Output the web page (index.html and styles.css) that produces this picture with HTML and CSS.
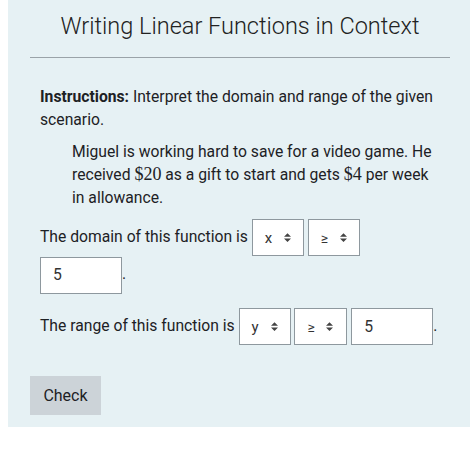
FILE: index.html
```html
<!DOCTYPE html>
<html>
<head>
<meta charset="utf-8">
<link rel="stylesheet" href="styles.css">
</head>
<body>
<div class="panel">
  <h1 class="title">Writing Linear Functions in Context</h1>
  <div class="content">
    <p class="instructions"><strong>Instructions:</strong> Interpret the domain and range of the given scenario.</p>
    <p class="story">Miguel is working hard to save for a video game. He received <span class="math">$20</span> as a gift to start and gets <span class="math">$4</span> per week in allowance.</p>
    <p class="line domain">The domain of this function is <span class="sel w52"><span class="val">x</span><svg class="arr" viewBox="0 0 8 10"><path d="M4 0 L8 4 H0 Z M0 6 H8 L4 10 Z" fill="#444"/></svg></span> <span class="sel w52"><span class="val sym">≥</span><svg class="arr" viewBox="0 0 8 10"><path d="M4 0 L8 4 H0 Z M0 6 H8 L4 10 Z" fill="#444"/></svg></span> <span class="nw"><span class="inp">5</span>.</span></p>
    <p class="line range">The range of this function is <span class="sel w52"><span class="val">y</span><svg class="arr" viewBox="0 0 8 10"><path d="M4 0 L8 4 H0 Z M0 6 H8 L4 10 Z" fill="#444"/></svg></span> <span class="sel w53"><span class="val sym">≥</span><svg class="arr" viewBox="0 0 8 10"><path d="M4 0 L8 4 H0 Z M0 6 H8 L4 10 Z" fill="#444"/></svg></span> <span class="nw"><span class="inp">5</span>.</span></p>
  </div>
  <button class="check">Check</button>
</div>
</body>
</html>
```

FILE: styles.css
```css
html, body {
  margin: 0;
  padding: 0;
  background: #ffffff;
}
body {
  font-family: Roboto, "Liberation Sans", sans-serif;
  color: #1d2125;
}
.panel {
  margin-left: 8px;
  width: 462px;
  height: 427px;
  box-sizing: border-box;
  background: #e6f1f4;
  padding: 0 20px 0 22px;
}
.title {
  margin: 0;
  padding: 12px 0 17px;
  font-size: 23.5px;
  line-height: 28px;
  font-weight: 300;
  text-align: center;
  border-bottom: 1px solid #9aa3a8;
  color: #222;
}
.content {
  padding-left: 10px;
  width: 401px;
  font-size: 15.7px;
  line-height: 23px;
}
.content p {
  margin: 0;
}
.instructions {
  padding-top: 27px;
}
.instructions strong {
  font-weight: 700;
}
.story {
  padding-left: 32px;
  margin-top: 9px !important;
}
.math {
  font-family: "Liberation Serif", "DejaVu Serif", serif;
  font-size: 18px;
  line-height: 20px;
}
.line {
  line-height: 36px;
}
.nw {
  white-space: nowrap;
}
.domain {
  margin-top: 10px !important;
}
.range {
  margin-top: 14px !important;
}
.sel {
  display: inline-flex;
  align-items: center;
  height: 37px;
  box-sizing: border-box;
  border: 1px solid #8e989e;
  background: #fff;
  vertical-align: middle;
  padding-left: 12px;
  font-size: 15px;
  color: #333;
}
.w52 { width: 52px; }
.w53 { width: 53px; }
.val {
  width: 19px;
  line-height: 20px;
}
.sym {
  font-size: 14px;
}
.arr {
  width: 7px;
  height: 9px;
}
.inp {
  display: inline-flex;
  align-items: center;
  width: 82px;
  height: 37px;
  box-sizing: border-box;
  border: 1px solid #8e989e;
  background: #fff;
  vertical-align: middle;
  padding-left: 12px;
  color: #333;
}
.check {
  margin-top: 31px;
  margin-left: 0;
  width: 71px;
  height: 39px;
  border: none;
  background: #ccd3d8;
  font-family: Roboto, "Liberation Sans", sans-serif;
  font-size: 16px;
  color: #1d2125;
  padding: 0;
}
```
